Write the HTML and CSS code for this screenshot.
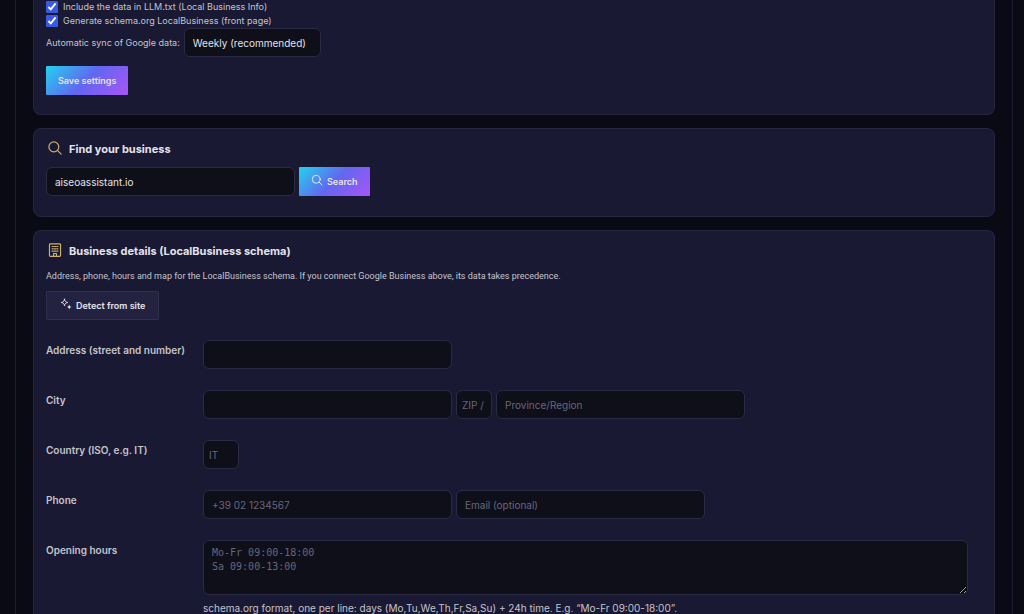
FILE: index.html
```html
<!DOCTYPE html>
<html lang="en">
<head>
<meta charset="utf-8">
<meta name="viewport" content="width=device-width, initial-scale=1">
<title>Local business settings</title>
<link rel="stylesheet" href="styles.css">
</head>
<body>
<main class="frame">
  <form class="card card-settings">
    <label class="check"><input type="checkbox" checked> Include the data in LLM.txt (Local Business Info)</label>
    <label class="check"><input type="checkbox" checked> Generate schema.org LocalBusiness (front page)</label>
    <div class="sync">
      <label for="sync">Automatic sync of Google data:</label>
      <select id="sync" class="field select"><option>Weekly (recommended)</option></select>
    </div>
    <button type="button" class="btn btn-primary">Save settings</button>
  </form>

  <section class="card card-find">
    <h2 class="title">
      <svg class="title-icon" viewBox="0 0 24 24" aria-hidden="true"><circle cx="10" cy="10" r="8.5"/><path d="M16.500 16.500 22.500 22.500"/></svg>
      Find your business
    </h2>
    <div class="find-row">
      <input class="field" type="text" value="aiseoassistant.io" aria-label="Business name or site">
      <button type="button" class="btn btn-primary">
        <svg class="btn-icon" viewBox="0 0 24 24" aria-hidden="true"><circle cx="10.500" cy="10.500" r="8"/><path d="M16.500 16.500 22 22"/></svg>
        Search
      </button>
    </div>
  </section>

  <section class="card card-details">
    <h2 class="title">
      <svg class="title-icon" viewBox="0 0 24 24" aria-hidden="true"><rect x="2.500" y="1.500" width="19" height="21.500" rx="1.500"/><path d="M7 6h2M11 6h2M15 6h2M7 10h2M11 10h2M15 10h2M7 14h2M11 14h2M15 14h2M9.500 22.500V18h5v4.500"/></svg>
      Business details (LocalBusiness schema)
    </h2>
    <p class="intro">Address, phone, hours and map for the LocalBusiness schema. If you connect Google Business above, its data takes precedence.</p>
    <button type="button" class="btn btn-ghost">
      <svg class="btn-icon" viewBox="0 0 24 24" aria-hidden="true"><path d="M9 2.500c.9 4.300 2.200 5.600 6.500 6.500-4.300.9-5.600 2.200-6.500 6.500C8.100 11.200 6.800 9.900 2.500 9 6.800 8.100 8.100 6.800 9 2.500Z"/><path class="solid" d="M18.500 13c.8 3.300 1.700 4.200 5 5-3.300.8-4.200 1.700-5 5-.8-3.300-1.700-4.200-5-5 3.300-.8 4.200-1.700 5-5Z"/></svg>
      Detect from site
    </button>

    <div class="grid">
      <label for="address">Address (street and number)</label>
      <div class="fields"><input id="address" class="field" type="text"></div>

      <label for="city">City</label>
      <div class="fields">
        <input id="city" class="field" type="text">
        <input class="field tiny" type="text" placeholder="ZIP / Postal code" aria-label="ZIP / Postal code">
        <input class="field" type="text" placeholder="Province/Region" aria-label="Province/Region">
      </div>

      <label for="country">Country (ISO, e.g. IT)</label>
      <div class="fields"><input id="country" class="field tiny" type="text" placeholder="IT"></div>

      <label for="phone">Phone</label>
      <div class="fields">
        <input id="phone" class="field" type="tel" placeholder="+39 02 1234567">
        <input class="field" type="email" placeholder="Email (optional)" aria-label="Email">
      </div>

      <label for="hours">Opening hours</label>
      <div>
        <textarea id="hours" class="field hours" placeholder="Mo-Fr 09:00-18:00&#10;Sa 09:00-13:00"></textarea>
        <p class="hint">schema.org format, one per line: days (Mo,Tu,We,Th,Fr,Sa,Su) + 24h time. E.g. “Mo-Fr 09:00-18:00”.</p>
      </div>
    </div>
  </section>
</main>
</body>
</html>
```
FILE: styles.css
```css
* { box-sizing: border-box; }

body {
  margin: 0;
  height: 100vh;
  overflow: hidden;
  background: #0a0a14;
  color: #c4c4ca;
  font: 9px/14px Inter, "Liberation Sans", sans-serif;
}

.frame {
  margin: 0 11px 0 15px;
  padding: 0 17px;
  border: solid #1c1c32;
  border-width: 0 1px;
}

.card {
  margin-bottom: 13px;
  padding: 12px 12px 20px;
  background: #1a1933;
  border: 1px solid #26263f;
  border-radius: 8px;
}

.card-settings {
  padding-top: 0;
  padding-bottom: 19px;
  border-top: 0;
  border-radius: 0 0 8px 8px;
}

.card-details {
  margin-bottom: 0;
  padding-bottom: 0;
  border-bottom: 0;
  border-radius: 8px 8px 0 0;
}

.check {
  display: flex;
  align-items: center;
  gap: 5px;
}

.check input {
  width: 12px;
  height: 12px;
  margin: 0;
  accent-color: #3858e9;
}

.sync {
  display: flex;
  align-items: center;
  gap: 4px;
  margin-bottom: 9px;
}

.field {
  width: 249px;
  height: 29px;
  margin: 0;
  padding: 0 8px;
  background: #0f0f1a;
  border: 1px solid #2a2a44;
  border-radius: 6px;
  color: #e2e2ea;
  font: 10px/14px Inter, "Liberation Sans", sans-serif;
}

.field::placeholder { color: #66667c; opacity: 1; }

.select {
  width: 137px;
  appearance: none;
}

.tiny {
  width: 36px;
  padding: 0 5px;
}

.btn {
  display: inline-flex;
  align-items: center;
  gap: 4px;
  height: 29px;
  padding: 0 12px;
  border: 1px solid #30304c;
  border-radius: 1px;
  color: #e4e4ec;
  font: 600 9px/14px Inter, "Liberation Sans", sans-serif;
}

.btn-primary {
  border: 0;
  background: linear-gradient(135deg, #22d3ee, #6366f1 50%, #a855f7);
}

.btn-ghost { padding: 0 13px; background: #232341; }

.btn-icon,
.title-icon {
  fill: none;
  stroke: currentColor;
  stroke-linecap: round;
  stroke-linejoin: round;
}

.btn-icon {
  width: 12px;
  height: 12px;
  margin-bottom: 3px;
  stroke-width: 2;
}

.solid { fill: currentColor; stroke: none; }

.title {
  display: flex;
  align-items: center;
  gap: 7px;
  margin: 0 0 9px;
  padding-left: 2px;
  color: #e4e4ec;
  font-size: 11px;
  line-height: 17px;
}

.title-icon {
  width: 14px;
  height: 14px;
  margin-bottom: 3px;
  color: #cdb36a;
  stroke-width: 2;
}

.find-row { display: flex; gap: 4px; }

.intro {
  margin: 0 0 8px;
  font-family: Roboto, "Liberation Sans", sans-serif;
}

.grid {
  display: grid;
  grid-template-columns: 145px 1fr;
  gap: 21px 12px;
  margin-top: 20px;
  padding-right: 14px;
}

.grid label {
  padding-top: 3px;
  font-size: 10px;
  font-weight: 600;
}

.fields { display: flex; gap: 4px; }

.hours {
  display: block;
  width: 100%;
  height: 55px;
  padding: 5px 8px;
  font-family: "DejaVu Sans Mono", monospace;
}

.hint { margin: 6px 0 0; font-size: 10px; }
```
